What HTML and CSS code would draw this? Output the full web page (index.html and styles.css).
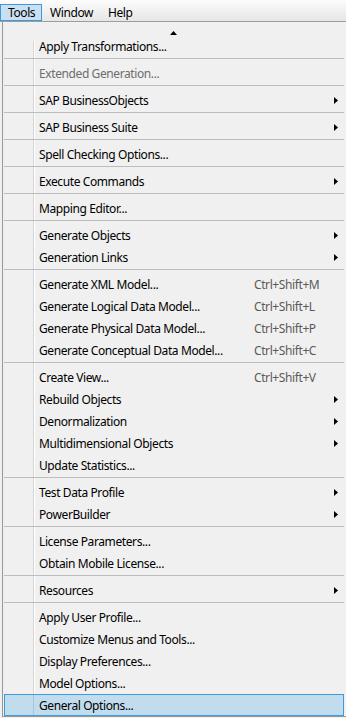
FILE: index.html
```html
<!DOCTYPE html>
<html lang="en">
<head>
  <meta charset="UTF-8">
  <title>Tools menu</title>
  <link rel="stylesheet" href="styles.css">
</head>
<body>

  <div class="menubar">
    <span class="top-item active">Tools</span>
    <span class="top-item">Window</span>
    <span class="top-item">Help</span>
  </div>

  <div class="menu">
    <div class="scroll-up">
      <svg width="7" height="4" viewBox="0 0 7 4"><polygon points="3.5,0 7,4 0,4" fill="#000"/></svg>
    </div>
    <ul class="items">
      <li class="item first"><span class="label">Apply Transformations...</span></li>
      <li class="sep"></li>
      <li class="item disabled"><span class="label">Extended Generation...</span></li>
      <li class="sep"></li>
      <li class="item sub"><span class="label">SAP BusinessObjects</span><svg class="arrow" width="4" height="7" viewBox="0 0 4 7"><polygon points="0,0 4,3.5 0,7" fill="#000"/></svg></li>
      <li class="sep"></li>
      <li class="item sub"><span class="label">SAP Business Suite</span><svg class="arrow" width="4" height="7" viewBox="0 0 4 7"><polygon points="0,0 4,3.5 0,7" fill="#000"/></svg></li>
      <li class="sep"></li>
      <li class="item"><span class="label">Spell Checking Options...</span></li>
      <li class="sep"></li>
      <li class="item sub"><span class="label">Execute Commands</span><svg class="arrow" width="4" height="7" viewBox="0 0 4 7"><polygon points="0,0 4,3.5 0,7" fill="#000"/></svg></li>
      <li class="sep"></li>
      <li class="item"><span class="label">Mapping Editor...</span></li>
      <li class="sep"></li>
      <li class="item sub"><span class="label">Generate Objects</span><svg class="arrow" width="4" height="7" viewBox="0 0 4 7"><polygon points="0,0 4,3.5 0,7" fill="#000"/></svg></li>
      <li class="item sub"><span class="label">Generation Links</span><svg class="arrow" width="4" height="7" viewBox="0 0 4 7"><polygon points="0,0 4,3.5 0,7" fill="#000"/></svg></li>
      <li class="sep"></li>
      <li class="item"><span class="label">Generate XML Model...</span><span class="key">Ctrl+Shift+M</span></li>
      <li class="item"><span class="label">Generate Logical Data Model...</span><span class="key">Ctrl+Shift+L</span></li>
      <li class="item"><span class="label">Generate Physical Data Model...</span><span class="key">Ctrl+Shift+P</span></li>
      <li class="item"><span class="label">Generate Conceptual Data Model...</span><span class="key">Ctrl+Shift+C</span></li>
      <li class="sep"></li>
      <li class="item"><span class="label">Create View...</span><span class="key">Ctrl+Shift+V</span></li>
      <li class="item sub"><span class="label">Rebuild Objects</span><svg class="arrow" width="4" height="7" viewBox="0 0 4 7"><polygon points="0,0 4,3.5 0,7" fill="#000"/></svg></li>
      <li class="item sub"><span class="label">Denormalization</span><svg class="arrow" width="4" height="7" viewBox="0 0 4 7"><polygon points="0,0 4,3.5 0,7" fill="#000"/></svg></li>
      <li class="item sub"><span class="label">Multidimensional Objects</span><svg class="arrow" width="4" height="7" viewBox="0 0 4 7"><polygon points="0,0 4,3.5 0,7" fill="#000"/></svg></li>
      <li class="item"><span class="label">Update Statistics...</span></li>
      <li class="sep"></li>
      <li class="item sub"><span class="label">Test Data Profile</span><svg class="arrow" width="4" height="7" viewBox="0 0 4 7"><polygon points="0,0 4,3.5 0,7" fill="#000"/></svg></li>
      <li class="item sub"><span class="label">PowerBuilder</span><svg class="arrow" width="4" height="7" viewBox="0 0 4 7"><polygon points="0,0 4,3.5 0,7" fill="#000"/></svg></li>
      <li class="sep"></li>
      <li class="item"><span class="label">License Parameters...</span></li>
      <li class="item"><span class="label">Obtain Mobile License...</span></li>
      <li class="sep"></li>
      <li class="item sub"><span class="label">Resources</span><svg class="arrow" width="4" height="7" viewBox="0 0 4 7"><polygon points="0,0 4,3.5 0,7" fill="#000"/></svg></li>
      <li class="sep"></li>
      <li class="item"><span class="label">Apply User Profile...</span></li>
      <li class="item"><span class="label">Customize Menus and Tools...</span></li>
      <li class="item"><span class="label">Display Preferences...</span></li>
      <li class="item"><span class="label">Model Options...</span></li>
      <li class="item hover"><span class="label">General Options...</span></li>
    </ul>
  </div>

</body>
</html>
```

FILE: styles.css
```css
* {
  margin: 0;
  padding: 0;
  box-sizing: border-box;
}

body {
  width: 346px;
  height: 718px;
  overflow: hidden;
  background: #f0f0f0;
  font-family: "Noto Sans", "Segoe UI", sans-serif;
  font-size: 12px;
  letter-spacing: -0.4px;
  color: #000;
}

/* menu bar */
.menubar {
  display: flex;
  height: 22px;
  background: linear-gradient(#fcfcfc, #e6e6e6);
  border-bottom: 1px solid #9d9d9d;
}

.top-item {
  height: 17px;
  margin-top: 4px;
  padding-left: 7px;
  line-height: 15px;
  border: 1px solid transparent;
}

.top-item:nth-child(1) { width: 42px; }
.top-item:nth-child(2) { width: 58px; }
.top-item:nth-child(3) { width: 50px; }

.top-item.active {
  background: #c9e0f2;
  border-color: #3d9ad9;
}

/* dropdown */
.menu {
  margin-left: 2px;
  height: 695px;
  overflow: hidden;
  border-left: 1px solid #979797;
  border-bottom: 1px solid #9a9a9a;
  background: #f0f0f0;
}

.scroll-up {
  height: 13px;
  padding-top: 9px;
  display: flex;
  justify-content: center;
  align-items: flex-start;
}

.scroll-up svg {
  display: block;
  margin-left: -2px;
}

.items {
  list-style: none;
  margin-left: 1px;
  width: 340px;
}

.item {
  display: flex;
  align-items: center;
  height: 22px;
  padding: 0 6px 0 35px;
  white-space: nowrap;
  background:
    linear-gradient(#d5d5d5, #d5d5d5) 29px 0 / 1px 100% no-repeat,
    linear-gradient(#ffffff, #ffffff) 30px 0 / 1px 100% no-repeat;
}

.item.first {
  background:
    linear-gradient(#d5d5d5, #d5d5d5) 29px 6px / 1px 100% no-repeat,
    linear-gradient(#ffffff, #ffffff) 30px 6px / 1px 100% no-repeat;
}

.label {
  flex: 0 0 215px;
}

.key {
  color: #5a5a5a;
}

.arrow {
  display: block;
  margin-left: auto;
}

.item.disabled {
  color: #6d6d6d;
}

.item.hover {
  border: 1px solid #3d9be0;
  padding-left: 34px;
  background:
    linear-gradient(#a9c6d9, #a9c6d9) 28px 0 / 1px 100% no-repeat,
    #c1dcec;
}

.sep {
  height: 5px;
  background:
    linear-gradient(#bdbdbd, #bdbdbd) 0 1px / 100% 1px no-repeat,
    linear-gradient(#d5d5d5, #d5d5d5) 29px 0 / 1px 100% no-repeat,
    linear-gradient(#ffffff, #ffffff) 30px 0 / 1px 100% no-repeat;
}
```
